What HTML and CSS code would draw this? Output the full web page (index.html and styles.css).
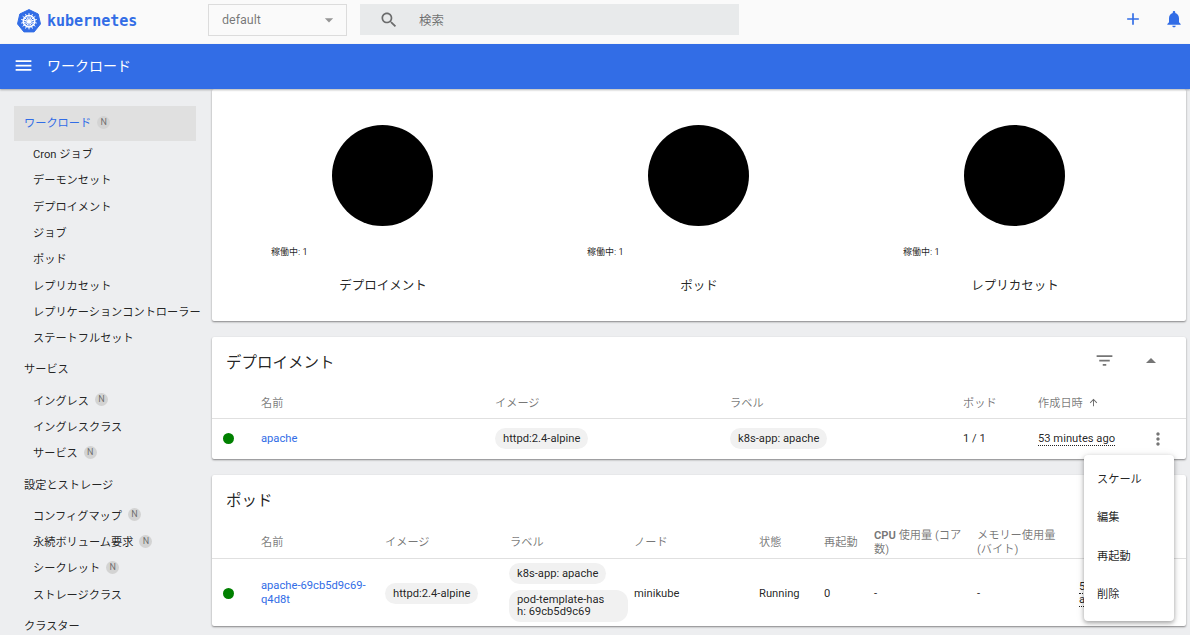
FILE: index.html
```html
<!DOCTYPE html>
<html lang="ja">
<head>
    <meta charset="UTF-8">
    <meta name="viewport" content="width=device-width, initial-scale=1.0">
    <title>ワークロード - Kubernetes Dashboard</title>
    <link rel="stylesheet" href="styles.css">
</head>
<body>

    <header class="topbar">
        <div class="brand">
            <svg class="brand-logo" viewBox="0 0 24 24" width="24" height="24">
                <path d="M12 .6 21.2 5l2.3 9.900-6.400 8H6.900l-6.400-8L2.800 5z" fill="#326de6" stroke="#326de6" stroke-linejoin="round"/>
                <g fill="none" stroke="#fff">
                    <circle cx="12" cy="12.300" r="5.700" stroke-width="1.500"/>
                    <path d="M12 4.200v16.200M5.700 7.300l12.600 10M18.300 7.300l-12.600 10M4.200 14.100l15.600-3.600M19.800 14.100 4.200 10.500M8.500 19.500l7-14.400M15.500 19.500l-7-14.400" stroke-width="1"/>
                </g>
                <circle cx="12" cy="12.300" r="1.600" fill="#fff"/>
            </svg>
            <span class="brand-name">kubernetes</span>
        </div>
        <div class="ns-select">
            <span>default</span>
            <svg class="icon-caret" viewBox="0 0 24 24" width="20" height="20"><path d="M7 10l5 5 5-5z"/></svg>
        </div>
        <div class="search">
            <svg viewBox="0 0 24 24" width="20" height="20"><path d="M15.500 14h-.79l-.28-.27C15.410 12.590 16 11.110 16 9.500 16 5.910 13.090 3 9.500 3S3 5.910 3 9.500 5.910 16 9.500 16c1.610 0 3.090-.59 4.230-1.570l.27.28v.79l5 4.990L20.490 19l-4.990-5zm-6 0C7.010 14 5 11.990 5 9.500S7.010 5 9.500 5 14 7.010 14 9.500 11.990 14 9.500 14z"/></svg>
            <span>検索</span>
        </div>
        <div class="top-actions">
            <svg viewBox="0 0 24 24" width="20" height="20"><path d="M19 13h-6v6h-2v-6H5v-2h6V5h2v6h6v2z"/></svg>
            <svg viewBox="0 0 24 24" width="20" height="20"><path d="M12 22c1.100 0 2-.9 2-2h-4c0 1.100.89 2 2 2zm6-6v-5c0-3.070-1.640-5.640-4.500-6.320V4c0-.83-.67-1.500-1.500-1.500s-1.500.67-1.500 1.500v.68C7.630 5.360 6 7.920 6 11v5l-2 2v1h16v-1l-2-2z"/></svg>
        </div>
    </header>

    <div class="titlebar">
        <svg viewBox="0 0 24 24" width="21" height="21"><path d="M3 18h18v-2H3v2zm0-5h18v-2H3v2zm0-7v2h18V6H3z"/></svg>
        <span>ワークロード</span>
    </div>

    <div class="layout">
        <nav class="sidebar">
            <div class="nav-active">ワークロード <span class="badge">N</span></div>
            <div class="nav-item">Cron ジョブ</div>
            <div class="nav-item">デーモンセット</div>
            <div class="nav-item">デプロイメント</div>
            <div class="nav-item">ジョブ</div>
            <div class="nav-item">ポッド</div>
            <div class="nav-item">レプリカセット</div>
            <div class="nav-item">レプリケーションコントローラー</div>
            <div class="nav-item">ステートフルセット</div>
            <div class="nav-title">サービス</div>
            <div class="nav-item">イングレス <span class="badge">N</span></div>
            <div class="nav-item">イングレスクラス</div>
            <div class="nav-item">サービス <span class="badge">N</span></div>
            <div class="nav-title">設定とストレージ</div>
            <div class="nav-item">コンフィグマップ <span class="badge">N</span></div>
            <div class="nav-item">永続ボリューム要求 <span class="badge">N</span></div>
            <div class="nav-item">シークレット <span class="badge">N</span></div>
            <div class="nav-item">ストレージクラス</div>
            <div class="nav-title">クラスター</div>
        </nav>

        <main class="content">
            <section class="card charts">
                <div class="chart">
                    <div class="circle"></div>
                    <div class="legend">稼働中: 1</div>
                    <div class="chart-name">デプロイメント</div>
                </div>
                <div class="chart">
                    <div class="circle"></div>
                    <div class="legend">稼働中: 1</div>
                    <div class="chart-name">ポッド</div>
                </div>
                <div class="chart">
                    <div class="circle"></div>
                    <div class="legend">稼働中: 1</div>
                    <div class="chart-name">レプリカセット</div>
                </div>
            </section>

            <section class="card">
                <div class="card-head">
                    <h2>デプロイメント</h2>
                    <svg class="icon-filter" viewBox="0 0 24 24" width="21" height="21"><path d="M10 18h4v-2h-4v2zM3 6v2h18V6H3zm3 7h12v-2H6v2z"/></svg>
                    <svg class="icon-up" viewBox="0 0 24 24" width="24" height="24"><path d="M7 14l5-5 5 5z"/></svg>
                </div>
                <div class="grid-deploy head-row">
                    <div></div>
                    <div>名前</div>
                    <div>イメージ</div>
                    <div>ラベル</div>
                    <div>ポッド</div>
                    <div class="sorted">作成日時
                        <svg viewBox="0 0 24 24" width="11" height="11"><path d="M4 12l1.410 1.410L11 7.830V20h2V7.830l5.580 5.590L20 12l-8-8-8 8z"/></svg>
                    </div>
                    <div></div>
                </div>
                <div class="grid-deploy body-row">
                    <div><span class="dot"></span></div>
                    <div><a class="link">apache</a></div>
                    <div><span class="chip">httpd:2.4-alpine</span></div>
                    <div><span class="chip">k8s-app: apache</span></div>
                    <div>1 / 1</div>
                    <div><span class="age">53 minutes ago</span></div>
                    <div class="more">
                        <svg viewBox="0 0 24 24" width="20" height="20"><path d="M12 8c1.100 0 2-.9 2-2s-.9-2-2-2-2 .9-2 2 .9 2 2 2zm0 2c-1.100 0-2 .9-2 2s.9 2 2 2 2-.9 2-2-.9-2-2-2zm0 6c-1.100 0-2 .9-2 2s.9 2 2 2 2-.9 2-2-.9-2-2-2z"/></svg>
                    </div>
                </div>
            </section>

            <section class="card">
                <div class="card-head">
                    <h2>ポッド</h2>
                </div>
                <div class="grid-pods head-row">
                    <div></div>
                    <div>名前</div>
                    <div>イメージ</div>
                    <div>ラベル</div>
                    <div>ノード</div>
                    <div>状態</div>
                    <div>再起動</div>
                    <div class="head-wrap"><b>CPU</b> 使用量 (コア数)</div>
                    <div class="head-wrap">メモリー使用量 <span class="nowrap">(バイト)</span></div>
                    <div></div>
                </div>
                <div class="grid-pods body-row">
                    <div><span class="dot"></span></div>
                    <div><a class="link">apache-69cb5d9c69-q4d8t</a></div>
                    <div><span class="chip">httpd:2.4-alpine</span></div>
                    <div class="chips">
                        <span class="chip">k8s-app: apache</span>
                        <span class="chip chip-wrap">pod-template-hash: 69cb5d9c69</span>
                    </div>
                    <div>minikube</div>
                    <div>Running</div>
                    <div>0</div>
                    <div>-</div>
                    <div>-</div>
                    <div><span class="age">53 minutes ago</span></div>
                </div>
            </section>
        </main>
    </div>

    <div class="popup">
        <div>スケール</div>
        <div>編集</div>
        <div>再起動</div>
        <div>削除</div>
    </div>

</body>
</html>
```

FILE: styles.css
```css
* {
    box-sizing: border-box;
}

body {
    font-family: Roboto, "Noto Sans CJK JP", sans-serif;
    font-size: 11.2px;
    color: rgba(0, 0, 0, 0.87);
    background-color: #edeef0;
    height: 635px;
    margin: 0;
    overflow: hidden;
}

.topbar {
    display: flex;
    align-items: center;
    height: 44px;
    background-color: #fafafa;
}

.brand {
    display: flex;
    align-items: center;
    gap: 6px;
    width: 208px;
    margin-top: -2px;
    padding-left: 17px;
}

.brand-name {
    font-family: "DejaVu Sans Mono", monospace;
    font-size: 15px;
    font-weight: bold;
    color: #326de6;
}

.ns-select {
    display: flex;
    align-items: center;
    justify-content: space-between;
    width: 139px;
    height: 32px;
    margin-right: 13px;
    margin-top: -4px;
    padding: 0 7px 0 13px;
    border: 1px solid #dcdcdc;
    font-size: 12.5px;
    line-height: 28px;
    color: rgba(0, 0, 0, 0.54);
}

.ns-select span {
    margin-top: -1px;
}

.icon-caret {
    fill: rgba(0, 0, 0, 0.4);
}

.search {
    display: flex;
    align-items: center;
    gap: 20px;
    width: 379px;
    height: 31px;
    margin-top: -5px;
    padding-left: 19px;
    background-color: #e8eaeb;
    font-size: 12.5px;
    color: rgba(0, 0, 0, 0.54);
}

.search svg {
    fill: rgba(0, 0, 0, 0.54);
}

.top-actions {
    display: flex;
    gap: 21px;
    margin-left: auto;
    margin-top: -6px;
    padding-right: 6px;
}

.top-actions svg {
    fill: #326de6;
}

.titlebar {
    display: flex;
    align-items: center;
    gap: 13px;
    height: 45px;
    padding: 0 0 3px 13px;
    background-color: #326de6;
    box-shadow: 0 1px 2px rgba(0, 0, 0, 0.3);
    color: #fff;
    font-size: 14px;
    position: relative;
}

.titlebar span {
    margin-top: -1px;
}

.titlebar svg {
    fill: #fff;
}

.layout {
    display: flex;
    height: 546px;
}

.sidebar {
    width: 212px;
    flex-shrink: 0;
    padding-top: 17px;
    overflow: hidden;
}

.nav-active {
    display: flex;
    align-items: center;
    gap: 6px;
    height: 35px;
    margin: 0 16px 0 14px;
    padding: 0 0 3px 10px;
    background-color: #e0e0e0;
    color: #326de6;
}

.nav-item {
    display: flex;
    align-items: center;
    gap: 6px;
    height: 26.3px;
    padding: 0 0 2px 33px;
    white-space: nowrap;
}

.nav-title {
    display: flex;
    align-items: center;
    height: 36.2px;
    padding: 0 0 2px 24px;
}

.badge {
    display: inline-block;
    width: 13px;
    height: 13px;
    border-radius: 50%;
    background-color: #d3d3d3;
    color: rgba(0, 0, 0, 0.5);
    font-size: 9px;
    line-height: 13px;
    text-align: center;
}

.content {
    flex: 1;
    padding-right: 4px;
}

.card {
    margin-bottom: 16px;
    background-color: #fff;
    border-radius: 2px;
    box-shadow: 0 1px 2px rgba(0, 0, 0, 0.45);
}

.charts {
    display: flex;
    height: 232px;
    padding: 36px 13px 0;
}

.chart {
    width: 316px;
}

.circle {
    width: 101px;
    height: 101px;
    margin-left: 107px;
    border-radius: 50%;
    background-color: #000;
}

.legend {
    margin-top: 20px;
    padding-left: 46px;
    font-size: 9px;
    line-height: 13px;
}

.chart-name {
    margin-top: 18px;
    font-size: 12.5px;
    line-height: 18px;
    text-align: center;
}

.card-head {
    display: flex;
    align-items: center;
    height: 50px;
    padding: 0 0 3px 14px;
}

.card-head h2 {
    margin: 0;
    font-size: 15.5px;
    font-weight: normal;
}

.icon-filter {
    margin-left: auto;
    fill: rgba(0, 0, 0, 0.54);
}

.icon-up {
    margin: 0 23px 0 24px;
    fill: rgba(0, 0, 0, 0.54);
}

.grid-deploy,
.grid-pods {
    display: grid;
    align-items: center;
}

.grid-deploy {
    grid-template-columns: 49px 234px 235px 233px 75px 107px 1fr;
}

.grid-pods {
    grid-template-columns: 49px 124px 125px 124px 125px 65px 50px 103px 102px 60px;
}

.head-row {
    padding-top: 2px;
    border-bottom: 1px solid #e0e0e0;
    color: rgba(0, 0, 0, 0.54);
    line-height: 14px;
}

.head-wrap {
    padding-right: 8px;
}

.nowrap {
    white-space: nowrap;
}

.card-head + .grid-deploy.head-row {
    height: 32px;
}

.card-head + .grid-pods.head-row {
    height: 34px;
}

.grid-deploy.body-row {
    height: 40px;
    padding-bottom: 1px;
}

.grid-pods.body-row {
    height: 67px;
    padding-top: 1px;
}

.sorted svg {
    vertical-align: -1px;
    margin-left: 2px;
    fill: rgba(0, 0, 0, 0.6);
}

.dot {
    display: block;
    width: 11px;
    height: 11px;
    margin-left: 10.5px;
    border-radius: 50%;
    background-color: #008000;
}

.link {
    color: #326de6;
    line-height: 14px;
}

.chip {
    display: inline-block;
    padding: 3px 8px;
    border-radius: 11px;
    background-color: #f1f1f1;
    line-height: 15px;
}

.chips {
    display: flex;
    flex-direction: column;
    align-items: flex-start;
    gap: 6px;
    margin: -2px 0 0 -1px;
}

.chip-wrap {
    width: 119px;
    padding: 4px 22px 4px 8px;
    border-radius: 12px;
    line-height: 12px;
    word-break: break-all;
}

.age {
    border-bottom: 1px dotted rgba(0, 0, 0, 0.87);
}

.more {
    display: flex;
    justify-content: center;
    padding-right: 16px;
}

.more svg {
    fill: rgba(0, 0, 0, 0.54);
}

.popup {
    position: absolute;
    left: 1084px;
    top: 455px;
    width: 90px;
    height: 166px;
    padding: 6px 0 0 13px;
    background-color: #fff;
    border-radius: 4px;
    box-shadow: 0 2px 4px rgba(0, 0, 0, 0.3), 0 1px 8px rgba(0, 0, 0, 0.12);
}

.popup div {
    height: 38.3px;
    line-height: 38px;
}
```
